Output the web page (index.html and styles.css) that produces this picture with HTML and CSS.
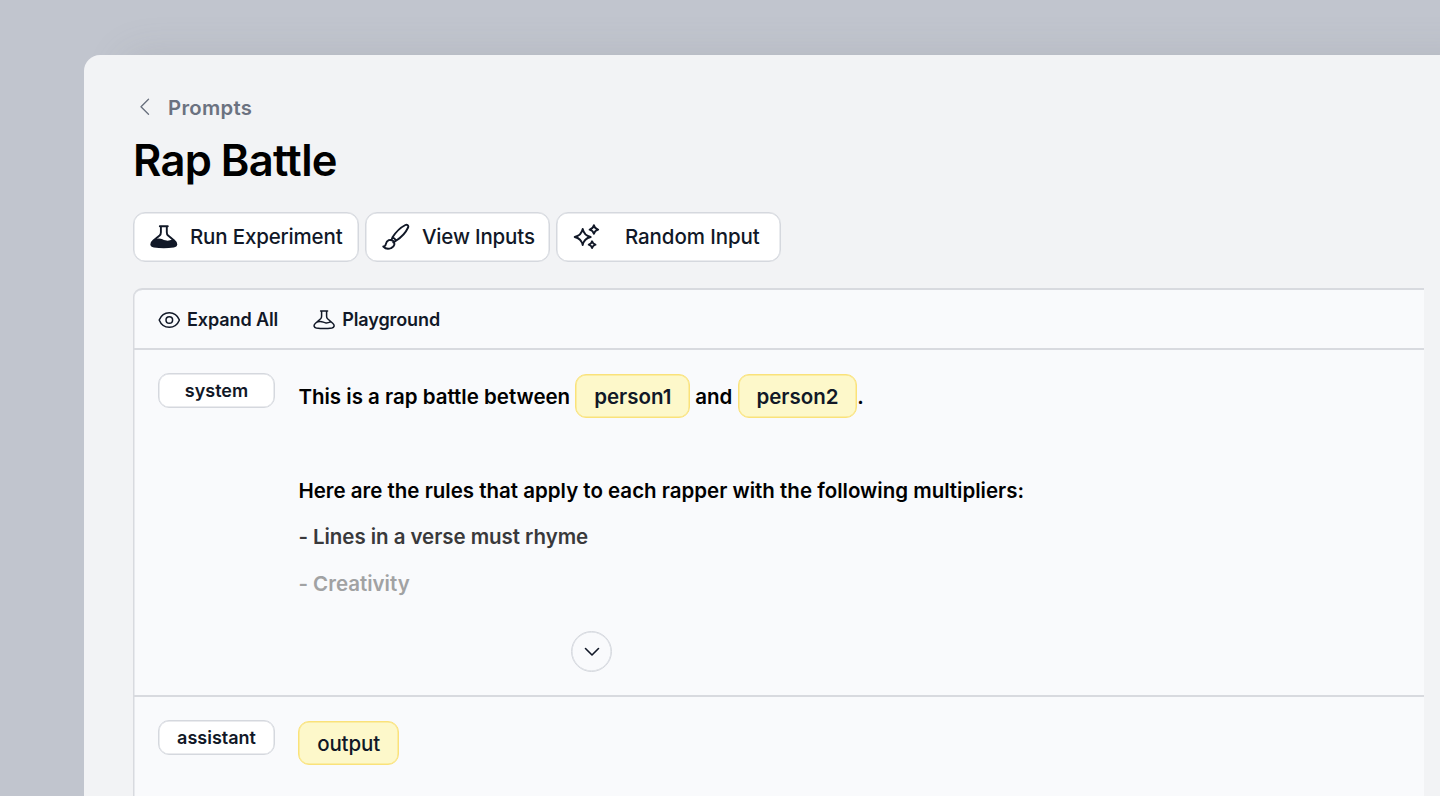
FILE: index.html
```html
<!DOCTYPE html>
<html lang="en">
<head>
<meta charset="utf-8">
<title>Rap Battle</title>
<link rel="stylesheet" href="styles.css">
</head>
<body>
<main class="window">
  <a class="back">
    <svg class="back-icon" viewBox="0 0 12 18"><path d="M9.500 1.300 2 8.800l7.500 7.500"/></svg>
    <span>Prompts</span>
  </a>
  <h1 class="title">Rap Battle</h1>
  <div class="actions">
    <button class="btn btn-run">
      <svg class="icon-lg" viewBox="0 0 28 28"><path d="M9.800 3.300h8M10.900 3.500v5.700c0 1.500-.4 2.500-1.300 3.300L3.500 17.500c-3.300 2.800-2.900 5.400.5 6q9.800 1.500 19.600 0c3.400-.6 3.800-3.200.5-6l-6-5c-.9-.8-1.300-1.800-1.300-3.300V3.500"/><path class="solid" d="M5.500 16c4.500-1.700 7.500.7 9.800 1.300 2.700.8 4.700.2 7.200-1l2 1.700c3 2.800 2.500 5-.8 5.600q-9.900 1.500-19.800 0c-3.300-.6-3.900-3-.9-5.600z"/></svg>
      <span>Run Experiment</span>
    </button>
    <button class="btn btn-view">
      <svg class="icon-lg" viewBox="0 0 28 28"><path d="M10.500 14.300c2.700-4.200 8-9.800 12.900-12.300 1.700-.9 3.500.5 2.700 2.500-2.300 5-7.500 10.300-12.100 13.200-.7-1.700-1.800-2.800-3.500-3.400zM10.500 14.300l-1.200 3M14 17.700l-2.700 1.700M1.300 23.500c2 .1 2.300-1.100 2.600-2.600.7-3.700 4.600-5.100 7-3.100 2.600 2.200 1.600 5.900-1.600 7.200-2.700 1.200-6 .7-8-1.500z"/></svg>
      <span>View Inputs</span>
    </button>
    <button class="btn btn-random">
      <svg class="icon-lg" viewBox="0 0 28 28"><path d="M9.700 6c1 4.700 3.300 7 8 8-4.700 1-7 3.300-8 8-1-4.700-3.300-7-8-8 4.700-1 7-3.300 8-8zM20.900 2.300c.6 2.600 1.700 3.700 4.300 4.300-2.600.6-3.700 1.700-4.300 4.300-.6-2.600-1.700-3.700-4.300-4.300 2.600-.6 3.700-1.700 4.300-4.300zM19.100 18.300c.5 2 1.400 2.900 3.400 3.400-2 .5-2.900 1.400-3.400 3.400-.5-2-1.400-2.900-3.400-3.400 2-.5 2.900-1.400 3.400-3.400z"/></svg>
      <span>Random Input</span>
    </button>
  </div>
  <section class="panel">
    <div class="toolbar">
      <a class="tool">
        <svg class="icon-sm" viewBox="0 0 22 22"><path d="M1.200 11c2-5 5.500-7.300 10.100-7.300S19.400 6 21.400 11c-2 5-5.500 7.300-10.100 7.300S3.200 16 1.200 11z"/><circle cx="11.300" cy="11" r="3.300"/></svg>
        <span>Expand All</span>
      </a>
      <a class="tool">
        <svg class="icon-sm" viewBox="0 0 22 22"><path d="M7.600 2h7M8.600 2v5.200c0 1.100-.3 1.900-1 2.600L2.500 14.300c-2.400 2.200-1.500 4.200.8 4.600q7.800 1.100 15.600 0c2.300-.4 3.200-2.400.8-4.600l-5.100-4.500c-.7-.7-1-1.500-1-2.600V2M4.800 12.900c3.800-1.600 5.500.9 8.200 1 1.700.1 3-.3 4.500-1"/></svg>
        <span>Playground</span>
      </a>
    </div>
    <article class="message message-system">
      <span class="role">system</span>
      <div class="content">
        <p class="line">This is a rap battle between <span class="variable">person1</span> and <span class="variable">person2</span>.</p>
        <p class="line">&nbsp;</p>
        <p class="line">Here are the rules that apply to each rapper with the following multipliers:</p>
        <p class="line line-dim">- Lines in a verse must rhyme</p>
        <p class="line line-faint">- Creativity</p>
      </div>
      <button class="expand"><svg viewBox="0 0 16 10"><path d="m1.500 1.500 6.500 6.500 6.500-6.500"/></svg></button>
    </article>
    <article class="message">
      <span class="role">assistant</span>
      <div class="content"><p class="line"><span class="variable variable-plain">output</span></p></div>
    </article>
  </section>
</main>
</body>
</html>
```

FILE: styles.css
```css
* { box-sizing: border-box; }
html, body { margin: 0; height: 100%; overflow: hidden; }
body {
  padding: 55px 0 0 84px;
  background: #c1c5ce;
  font-family: Inter, sans-serif;
  font-variant-ligatures: none;
  color: #111827;
}
svg { display: block; fill: none; stroke: currentColor; stroke-linecap: round; stroke-linejoin: round; flex: none; }
.window {
  height: 741px;
  padding: 37px 16px 0 49px;
  overflow: hidden;
  background: #f2f3f5;
  border-radius: 16px 0 0 0;
  box-shadow: 40px 0 40px rgba(110, 112, 116, .16);
}
.back { display: flex; align-items: center; height: 30px; gap: 17px; padding-left: 6px; color: #6b7280; font-size: 20.300px; font-weight: 600; letter-spacing: .3px; }
.back-icon { width: 12px; height: 18px; stroke-width: 1.4; }
.title { margin: 9px 0 0; height: 58px; line-height: 58px; font-size: 43.500px; font-weight: 600; letter-spacing: -.65px; word-spacing: -1px; color: #000; }
.actions { display: flex; gap: 6px; margin-top: 23px; }
.btn {
  display: flex; align-items: center; height: 50px; padding: 0 0 1px 16px;
  background: #fff; border: 1px solid #d5d8de; border-radius: 12px;
  box-shadow: inset 0 0 0 .5px #d5d8de;
  font: 500 20.500px Inter, sans-serif; letter-spacing: -.17px; color: #111827; white-space: nowrap;
}
.btn-run { width: 226px; gap: 12px; }
.btn-view { width: 185px; gap: 12px; }
.btn-random { width: 225px; gap: 24px; letter-spacing: -.1px; }
.icon-lg { width: 28px; height: 28px; stroke-width: 1.900; }
.solid { fill: currentColor; stroke: none; }
.panel { height: 560px; margin-top: 26px; border: 2px solid #d8dadf; border-left-width: 1px; border-right: 0; border-radius: 9px 0 0 0; box-shadow: inset .5px 0 0 #d8dadf; background: #f9fafc; }
.toolbar { display: flex; align-items: center; gap: 35px; height: 60px; padding: 1px 0 0 24px; border-bottom: 2px solid #d8dadf; font-size: 18px; font-weight: 600; letter-spacing: -.1px; }
.tool { display: flex; align-items: center; gap: 7px; }
.icon-sm { width: 22px; height: 22px; stroke-width: 1.500; }
.message { position: relative; display: flex; align-items: flex-start; gap: 23.400px; padding: 23px 0 0 24px; }
.message-system { height: 347px; border-bottom: 2px solid #d8dadf; }
.role { flex: none; width: 117px; height: 35px; border: 1px solid #d5d8de; border-radius: 11px; box-shadow: inset 0 0 0 .5px #d5d8de; background: #fff; text-align: center; font-size: 18px; font-weight: 600; line-height: 33px; }
.content { padding-top: 1px; }
.line { margin: 0; height: 46.800px; line-height: 46.800px; font-size: 20.500px; font-weight: 600; color: #000; white-space: nowrap; }
.line-dim { color: #39393b; letter-spacing: -.05px; }
.line-faint { color: #a1a2a3; }
.variable { display: inline-block; height: 44px; line-height: 43px; padding: 0 17.800px; border: 1px solid #fae27a; border-radius: 11px; box-shadow: inset 0 0 0 .5px #fae27a; background: #fdf8ca; color: #111827; }
.variable-plain { font-weight: 500; letter-spacing: -.15px; }
.expand { position: absolute; left: 437px; bottom: 23px; display: grid; place-items: center; width: 41px; height: 41px; padding: 0; border: 1px solid #d5d8de; border-radius: 50%; box-shadow: inset 0 0 0 .5px #d5d8de; background: transparent; color: #111827; }
.expand svg { width: 16px; height: 10px; stroke-width: 1.600; }
```
